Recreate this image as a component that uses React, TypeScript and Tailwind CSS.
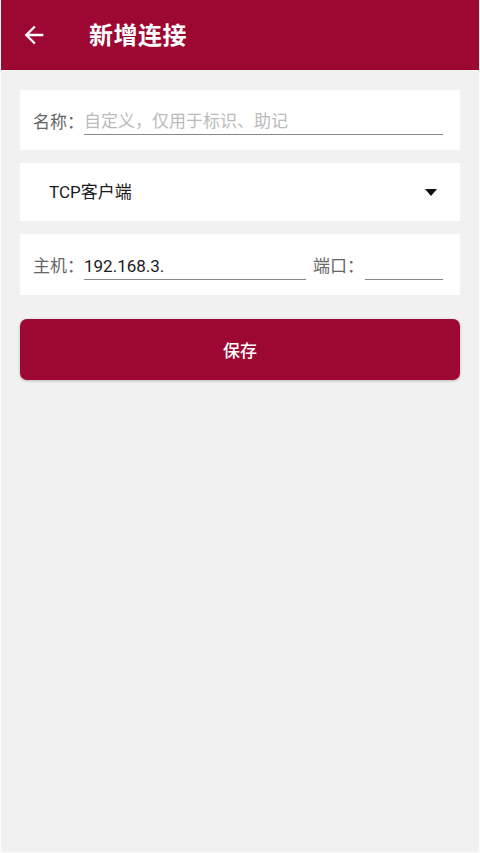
const font = { fontFamily: 'Roboto, "Noto Sans CJK SC", sans-serif' }

function Card({ children, className = '' }: { children: React.ReactNode; className?: string }) {
  return <div className={`flex items-center bg-white pl-[13px] pr-[17px] ${className}`}>{children}</div>
}

function BackArrow() {
  return (
    <svg width="28" height="28" viewBox="0 0 24 24" fill="white">
      <path d="M20 11H7.83l5.59-5.59L12 4l-8 8 8 8 1.41-1.41L7.83 13H20v-2z" />
    </svg>
  )
}

export default function App() {
  return (
    <div
      className="flex h-[853px] w-[480px] flex-col border-x border-b border-[#fafafa] bg-[#f1f1f1]"
      style={font}
    >
      <header className="flex h-[70px] shrink-0 items-center bg-[#9d0833] pl-[19px] text-white">
        <BackArrow />
        <h1
          className="ml-[41px] mb-[2px] text-[24px] font-bold tracking-[0.5px]"
          style={{ fontFamily: '"Noto Sans CJK SC", sans-serif' }}
        >
          新增连接
        </h1>
      </header>

      <div className="flex flex-col gap-[13px] px-[19px] pt-[20px]">
        <Card className="h-[60px]">
          <span className="mt-[3px] text-[17px] leading-[24px] text-[#666]">名称：</span>
          <div className="mt-[4px] flex-1 border-b border-[#888] pb-[1px] text-[17px] leading-[24px] text-[#bbb]">
            自定义，仅用于标识、助记
          </div>
        </Card>

        <Card className="h-[58px] justify-between pl-[29px] pr-[23px]">
          <span className="text-[17px] leading-[24px] text-[#1a1a1a]">TCP客户端</span>
          <svg width="12" height="7" viewBox="0 0 12 7">
            <path d="M0 0h12L6 7z" fill="#111" />
          </svg>
        </Card>

        <Card className="h-[61px]">
          <span className="mt-[3px] text-[17px] leading-[24px] text-[#666]">主机：</span>
          <div className="mt-[4px] w-[222px] border-b border-[#888] pb-[1px] text-[17px] leading-[24px] text-[#1a1a1a]">
            192.168.3.
          </div>
          <span className="ml-[7px] mt-[3px] text-[17px] leading-[24px] text-[#666]">端口：</span>
          <div className="mt-[4px] ml-[1px] h-[26px] flex-1 border-b border-[#888]" />
        </Card>
      </div>

      <div className="px-[19px] pt-[24px]">
        <button
          type="button"
          className="flex h-[61px] w-full items-center justify-center rounded-[7px] bg-[#9d0833] text-[17px] font-medium text-white shadow-[0_1px_3px_rgba(0,0,0,0.25)]"
          style={{ fontFamily: '"Noto Sans CJK SC", sans-serif' }}
        >
          保存
        </button>
      </div>
    </div>
  )
}
